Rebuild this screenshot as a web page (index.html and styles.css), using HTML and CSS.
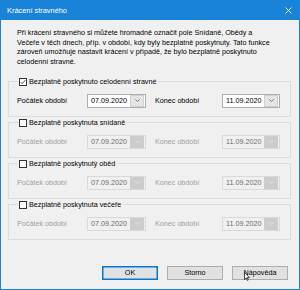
FILE: index.html
```html
<!DOCTYPE html>
<html lang="cs">
<head>
    <meta charset="UTF-8">
    <title>Krácení stravného</title>
    <link rel="stylesheet" href="styles.css">
</head>
<body>
    <div class="window">
        <div class="titlebar">
            <span class="title">Krácení stravného</span>
            <svg class="close" width="7" height="7" viewBox="0 0 7 7"><path d="M0.5 0.5L6.5 6.5M6.5 0.5L0.5 6.5" stroke="#fff" stroke-width="0.9"/></svg>
        </div>

        <div class="content">
            <p class="intro">Při krácení stravného si můžete hromadně označit pole Snídaně, Obědy a<br>Večeře v těch dnech, příp. v období, kdy byly bezplatně poskytnuty. Tato funkce<br>zároveň umožňuje nastavit krácení v případě, že bylo bezplatně poskytnuto<br>celodenní stravné.</p>

            <fieldset class="group">
                <legend><span class="check on"><svg width="6" height="6" viewBox="0 0 6 6"><path d="M0.6 3.1L2.2 4.7L5.4 1.2" fill="none" stroke="#333" stroke-width="0.9"/></svg></span>Bezplatně poskytnuto celodenní stravné</legend>
                <div class="row">
                    <span class="lbl">Počátek období</span>
                    <div class="date date-from"><span class="val">07.09.2020</span><span class="drop"><svg width="5" height="3" viewBox="0 0 5 3"><path d="M0.3 0.3L2.5 2.5L4.7 0.3" fill="none" stroke="#606060" stroke-width="0.8"/></svg></span></div>
                    <span class="lbl lbl-end">Konec období</span>
                    <div class="date"><span class="val">11.09.2020</span><span class="drop"><svg width="5" height="3" viewBox="0 0 5 3"><path d="M0.3 0.3L2.5 2.5L4.7 0.3" fill="none" stroke="#606060" stroke-width="0.8"/></svg></span></div>
                </div>
            </fieldset>

            <fieldset class="group off">
                <legend><span class="check"></span>Bezplatně poskytnuta snídaně</legend>
                <div class="row">
                    <span class="lbl">Počátek období</span>
                    <div class="date date-from"><span class="val">07.09.2020</span><span class="drop"><svg width="5" height="3" viewBox="0 0 5 3"><path d="M0.3 0.3L2.5 2.5L4.7 0.3" fill="none" stroke="#e8e8e8" stroke-width="0.8"/></svg></span></div>
                    <span class="lbl lbl-end">Konec období</span>
                    <div class="date"><span class="val">11.09.2020</span><span class="drop"><svg width="5" height="3" viewBox="0 0 5 3"><path d="M0.3 0.3L2.5 2.5L4.7 0.3" fill="none" stroke="#e8e8e8" stroke-width="0.8"/></svg></span></div>
                </div>
            </fieldset>

            <fieldset class="group off">
                <legend><span class="check"></span>Bezplatně poskytnutý oběd</legend>
                <div class="row">
                    <span class="lbl">Počátek období</span>
                    <div class="date date-from"><span class="val">07.09.2020</span><span class="drop"><svg width="5" height="3" viewBox="0 0 5 3"><path d="M0.3 0.3L2.5 2.5L4.7 0.3" fill="none" stroke="#e8e8e8" stroke-width="0.8"/></svg></span></div>
                    <span class="lbl lbl-end">Konec období</span>
                    <div class="date"><span class="val">11.09.2020</span><span class="drop"><svg width="5" height="3" viewBox="0 0 5 3"><path d="M0.3 0.3L2.5 2.5L4.7 0.3" fill="none" stroke="#e8e8e8" stroke-width="0.8"/></svg></span></div>
                </div>
            </fieldset>

            <fieldset class="group off">
                <legend><span class="check"></span>Bezplatně poskytnuta večeře</legend>
                <div class="row">
                    <span class="lbl">Počátek období</span>
                    <div class="date date-from"><span class="val">07.09.2020</span><span class="drop"><svg width="5" height="3" viewBox="0 0 5 3"><path d="M0.3 0.3L2.5 2.5L4.7 0.3" fill="none" stroke="#e8e8e8" stroke-width="0.8"/></svg></span></div>
                    <span class="lbl lbl-end">Konec období</span>
                    <div class="date"><span class="val">11.09.2020</span><span class="drop"><svg width="5" height="3" viewBox="0 0 5 3"><path d="M0.3 0.3L2.5 2.5L4.7 0.3" fill="none" stroke="#e8e8e8" stroke-width="0.8"/></svg></span></div>
                </div>
            </fieldset>

            <div class="buttons">
                <button class="btn btn-default">OK</button>
                <button class="btn">Storno</button>
                <button class="btn btn-help">Nápověda
                    <!-- mouse pointer hovering over the help button -->
                    <svg class="cursor" width="6" height="9" viewBox="0 0 6 9"><path d="M0.5 0.5L0.5 7.5L2.2 6L3.3 8.4L4.3 8L3.2 5.6L5.4 5.6Z" fill="#fff" stroke="#000" stroke-width="0.7" stroke-linejoin="round"/></svg>
                </button>
            </div>
        </div>
    </div>
</body>
</html>
```

FILE: styles.css
```css
html, body {
    margin: 0;
    padding: 0;
    background-color: #f0f0f0;
}
body {
    font-family: "Liberation Sans", Arial, sans-serif;
    font-size: 7.2px;
    color: #000;
}
.window {
    width: 298px;
    height: 288px;
    border: 1px solid #1883d7;
    background-color: #f0f0f0;
}
.titlebar {
    height: 19px;
    background-color: #1883d7;
    color: #fff;
    display: flex;
    align-items: center;
    justify-content: space-between;
    padding: 0 7px 0 6px;
}
.title {
    font-size: 7.4px;
}
.close {
    display: block;
}
.content {
    padding: 0 10px 0 7px;
}
.intro {
    margin: 8px 0 0 9px;
    line-height: 9.6px;
    white-space: nowrap;
}
.group {
    margin: 10.6px 0 0 0;
    padding: 7px 0 8px 0;
    border: 1px solid #dcdcdc;
    min-inline-size: 0;
    width: 283px;
    box-sizing: border-box;
}
.group + .group {
    margin-top: 1px;
}
.group legend {
    margin-left: 9px;
    padding: 0 2px 0 1px;
    line-height: 10px;
    display: flex;
    align-items: center;
}
.check {
    width: 6px;
    height: 6px;
    border: 1px solid #333;
    background-color: #fff;
    margin-right: 2px;
    display: flex;
    align-items: center;
    justify-content: center;
}
.check svg {
    display: block;
}
.row {
    display: flex;
    align-items: center;
    height: 14px;
    padding-left: 8px;
}
.lbl {
    width: 70px;
}
.lbl-end {
    width: 67px;
    padding-left: 9px;
}
.date {
    width: 58px;
    height: 14px;
    box-sizing: border-box;
    border: 1px solid #abadb3;
    background-color: #fff;
    display: flex;
    align-items: center;
    justify-content: space-between;
    padding: 1px 1px 1px 3px;
}
.date-from {
    width: 59px;
}
.drop {
    width: 12px;
    height: 10px;
    background-color: #e5e5e5;
    border: 1px solid #d0d0d0;
    display: flex;
    align-items: center;
    justify-content: center;
}
.drop svg {
    display: block;
}
.off .lbl {
    color: #a0a0a0;
}
.off .date {
    background-color: #f0f0f0;
    border-color: #d9d9d9;
    color: #6d6d6d;
}
.off .drop {
    background-color: #cccccc;
    border-color: #cccccc;
}
.buttons {
    display: flex;
    justify-content: flex-end;
    gap: 9px;
    margin-top: 26px;
    padding-right: 1px;
}
.btn {
    width: 56px;
    height: 14px;
    padding: 0;
    font-family: inherit;
    font-size: 7.2px;
    color: #000;
    background-color: #e1e1e1;
    border: 1px solid #adadad;
    border-radius: 0;
}
.btn-default {
    border-color: #0078d7;
    box-shadow: inset 0 0 0 0.5px #0078d7;
}
.btn-help {
    position: relative;
}
.cursor {
    position: absolute;
    left: 11px;
    top: 5px;
}
```
